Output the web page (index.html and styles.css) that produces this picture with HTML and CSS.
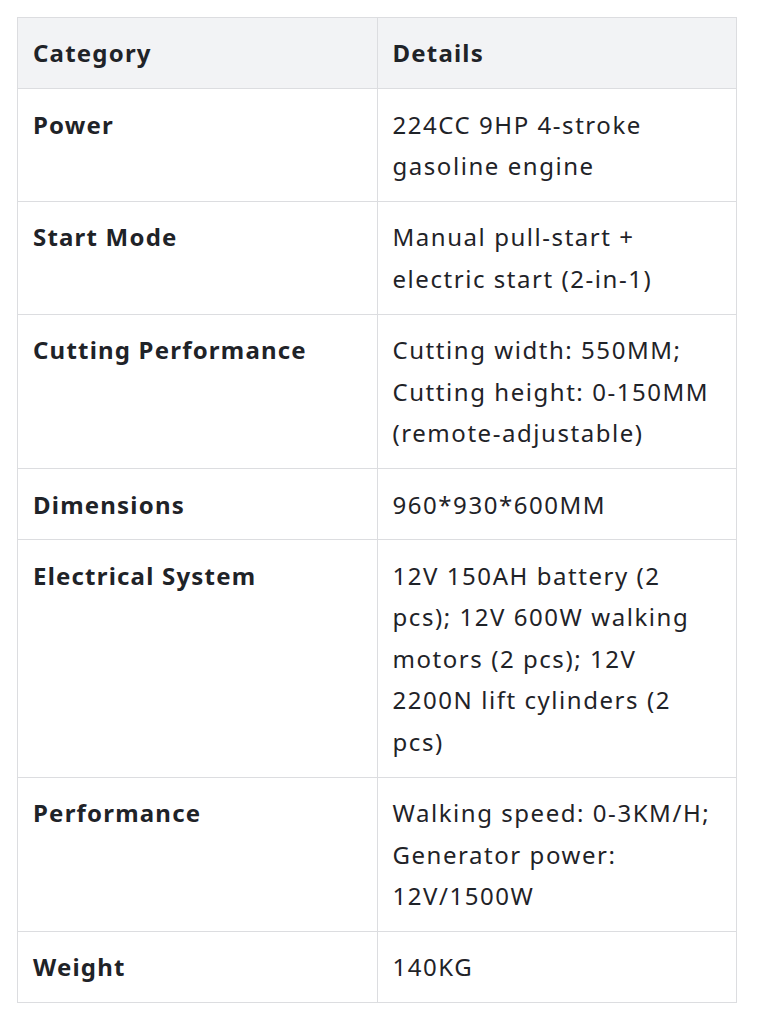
FILE: index.html
```html
<!DOCTYPE html>
<html>
<head>
<meta charset="utf-8">
<link rel="stylesheet" href="styles.css">
</head>
<body>
<table class="spec">
  <thead>
    <tr><th>Category</th><th>Details</th></tr>
  </thead>
  <tbody>
    <tr><td class="key">Power</td><td>224CC 9HP 4-stroke gasoline engine</td></tr>
    <tr><td class="key">Start Mode</td><td>Manual pull-start + electric start (2-in-1)</td></tr>
    <tr><td class="key">Cutting Performance</td><td>Cutting width: 550MM; Cutting height: 0-150MM (remote-adjustable)</td></tr>
    <tr><td class="key">Dimensions</td><td>960*930*600MM</td></tr>
    <tr><td class="key">Electrical System</td><td>12V 150AH battery (2 pcs); 12V 600W walking motors (2 pcs); 12V 2200N lift cylinders (2 pcs)</td></tr>
    <tr><td class="key">Performance</td><td>Walking speed: 0-3KM/H; Generator power: 12V/1500W</td></tr>
    <tr><td class="key">Weight</td><td>140KG</td></tr>
  </tbody>
</table>
</body>
</html>
```
FILE: styles.css
```css
html, body {
  margin: 0;
  padding: 0;
  background: #ffffff;
}
body {
  padding: 17px 20px 10px 17px;
  font-family: "Noto Sans", "Open Sans", sans-serif;
  color: #1f2328;
}
.spec {
  width: 720px;
  border-collapse: collapse;
  table-layout: fixed;
  font-size: 24px;
  line-height: 41.5px;
  letter-spacing: 1.55px;
}
.spec th, .spec td {
  border: 1px solid #dcdde0;
  padding: 14.4px 15px;
  text-align: left;
  vertical-align: top;
  width: 50%;
}
.spec th {
  background: #f2f3f5;
  font-weight: 700;
  letter-spacing: 1.2px;
}
.spec td.key {
  font-weight: 700;
  letter-spacing: 1.2px;
}
```
